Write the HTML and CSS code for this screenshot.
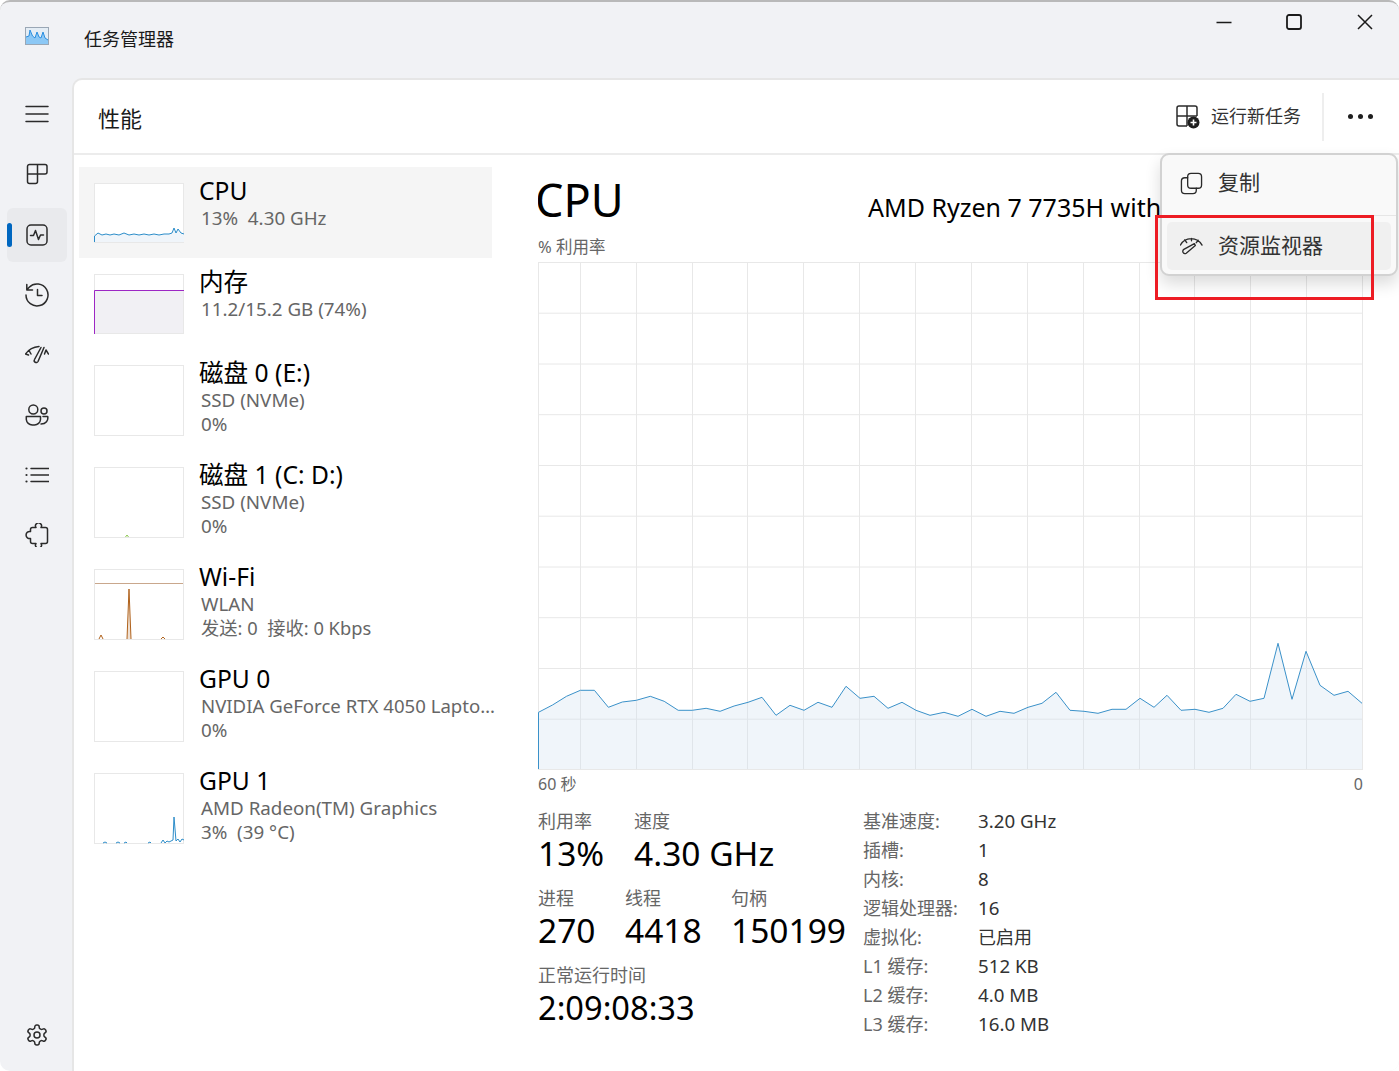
FILE: index.html
```html
<!DOCTYPE html>
<html lang="zh-CN">
<head>
<meta charset="utf-8">
<title>任务管理器</title>
<link rel="stylesheet" href="styles.css">
</head>
<body>
<div class="window">
  <header class="titlebar">
    <svg class="app-icon" viewBox="0 0 24 18"><rect x=".5" y=".5" width="23" height="17" fill="#e4edf5" stroke="#9aa7b5"/><path d="M1 16V10L4 9 5 3 7.500 9 10 11 12 5 14 10 16 11 18 5 20 11 23 13V17H1Z" fill="#8cc8f5"/><path d="M1 10L4 9 5 3 7.500 9 10 11 12 5 14 10 16 11 18 5 20 11 23 13" fill="none" stroke="#2b8fe0"/></svg>
    <span class="app-title">任务管理器</span>
    <div class="win-controls">
      <button class="win-btn"><svg viewBox="0 0 16 16" class="win-ic"><path d="M.5 8.500H15.500"/></svg></button>
      <button class="win-btn"><svg viewBox="0 0 16 16" class="win-ic win-ic-max"><rect x="1" y="1" width="14" height="14" rx="2"/></svg></button>
      <button class="win-btn win-close"><svg viewBox="0 0 16 16" class="win-ic"><path d="M1 1L15 15M15 1L1 15"/></svg></button>
    </div>
  </header>
  <div class="main">
    <nav class="nav">
      <div class="nav-item"><svg class="ic" viewBox="0 1 24 24"><path d="M1 4.500H23M1 12H23M1 19.500H23"/></svg></div>
      <div class="nav-item"><svg class="ic" viewBox="0 1 24 24"><path d="M4.500 2.500H20a2 2 0 0 1 2 2V10a2 2 0 0 1-2 2H12.500V19.500a2 2 0 0 1-2 2H4.500a2 2 0 0 1-2-2V4.500a2 2 0 0 1 2-2ZM12.500 2.500V12M2.500 12H12.500"/></svg></div>
      <div class="nav-item nav-active"><span class="nav-pill"></span><svg class="ic" viewBox="0 0 24 24"><rect x="2" y="2" width="20" height="20" rx="4"/><path d="M5.500 12.500H8.500L10.500 7.500 13.500 16.500 15.500 12H18.500"/></svg></div>
      <div class="nav-item"><svg class="ic" viewBox="0 0 24 24"><path d="M1 12A11 11 0 1 0 4.200 4.200L1.800 6.800M1.800 1.500V7H7.500M12.500 6.500V12.500H17"/></svg></div>
      <div class="nav-item"><svg class="ic" viewBox="0 1 24 24"><path d="M.5 12C3 8.500 7 5 14 4.500M4 8.500L6 12M.5 12L3.500 13M19.500 12L21 8 23.500 12"/><path d="M16 5.500L9.500 17.500A2 2 0 0 0 13 19.500L19 5.500"/></svg></div>
      <div class="nav-item"><svg class="ic" viewBox="0 0 24 24"><circle cx="8.300" cy="6.500" r="4.500"/><circle cx="19" cy="8" r="3"/><path d="M1.300 13.500H15.500V16.500A6 6 0 0 1 9.500 22H7.300A6 6 0 0 1 1.300 16.500ZM18 13.500H22.700C23.500 17.500 21 21 16 21"/></svg></div>
      <div class="nav-item"><svg class="ic" viewBox="0 0 24 24"><path d="M6 5.500H24M6 12H24M6 18.500H24"/><circle class="dot" cx="1.500" cy="5.500" r="1.100"/><circle class="dot" cx="1.500" cy="12" r="1.100"/><circle class="dot" cx="1.500" cy="18.500" r="1.100"/></svg></div>
      <div class="nav-item"><svg class="ic" viewBox="0 1 24 24"><path d="M11 5.500A3 3 0 1 1 16 5.500H20.500A2 2 0 0 1 22.500 7.500V19.500A2 2 0 0 1 20.500 21.500H16A3 3 0 1 1 11 21.500H7.500A2 2 0 0 1 5.500 19.500V16.500A3.600 3.600 0 1 1 5.500 9.500V7.500A2 2 0 0 1 7.500 5.500Z"/></svg></div>
      <div class="nav-item nav-bottom"><svg class="ic" viewBox="0 0 24 24"><path d="M12.220 2h-.44a2 2 0 0 0-2 2v.18a2 2 0 0 1-1 1.730l-.43.25a2 2 0 0 1-2 0l-.15-.08a2 2 0 0 0-2.730.73l-.22.38a2 2 0 0 0 .73 2.730l.15.1a2 2 0 0 1 1 1.720v.51a2 2 0 0 1-1 1.740l-.15.09a2 2 0 0 0-.73 2.730l.22.38a2 2 0 0 0 2.730.73l.15-.08a2 2 0 0 1 2 0l.43.25a2 2 0 0 1 1 1.730V20a2 2 0 0 0 2 2h.44a2 2 0 0 0 2-2v-.18a2 2 0 0 1 1-1.730l.43-.25a2 2 0 0 1 2 0l.15.08a2 2 0 0 0 2.730-.73l.22-.39a2 2 0 0 0-.73-2.730l-.15-.08a2 2 0 0 1-1-1.740v-.5a2 2 0 0 1 1-1.740l.15-.09a2 2 0 0 0 .73-2.730l-.22-.38a2 2 0 0 0-2.730-.73l-.15.08a2 2 0 0 1-2 0l-.43-.25a2 2 0 0 1-1-1.730V4a2 2 0 0 0-2-2Z"/><circle cx="12" cy="12" r="3"/></svg></div>
    </nav>
    <section class="panel">
      <div class="panel-head">
        <h1 class="panel-title">性能</h1>
        <div class="head-actions">
          <div class="run-task">
            <svg class="ic-run" viewBox="0 0 24 24"><path class="thin" d="M11 21H3A2 2 0 0 1 1 19V3A2 2 0 0 1 3 1H19A2 2 0 0 1 21 3V11M11 1V11H1M1 11H21M11 11V21"/><circle cx="17.500" cy="17.500" r="6" fill="#1f1f1f"/><path d="M17.500 14.500V20.500M14.500 17.500H20.500" stroke="#fff" stroke-width="1.600" fill="none"/></svg>
            <span class="run-label">运行新任务</span>
          </div>
          <span class="head-divider"></span>
          <div class="more"><i></i><i></i><i></i></div>
        </div>
      </div>
      <div class="panel-body">
        <div class="list">
          <div class="row row-selected">
            <svg class="thumb" viewBox="0 0 90 60"><path class="fill-blue" d="M0 59V53L4 50 8 52 12 51 16 52 20 51 25 52 30 50 35 52 40 51 45 52 50 51 55 52 60 51 65 52 70 51 75 51 78 50 80 45 82 50 84 46 87 50 90 51V59Z"/><path class="line-blue" d="M.5 59V53L4 50 8 52 12 51 16 52 20 51 25 52 30 50 35 52 40 51 45 52 50 51 55 52 60 51 65 52 70 51 75 51 78 50 80 45 82 50 84 46 87 50 90 51"/></svg>
            <div class="row-text"><div class="row-name">CPU</div><div class="row-sub">13%&nbsp; 4.30 GHz</div></div>
          </div>
          <div class="row">
            <svg class="thumb" viewBox="0 0 90 60"><path d="M1 16H89V59H1Z" fill="#f1f0f4"/><path d="M.5 60V16.500H90" fill="none" stroke="#9d27c4"/></svg>
            <div class="row-text"><div class="row-name">内存</div><div class="row-sub">11.2/15.2 GB (74%)</div></div>
          </div>
          <div class="row">
            <svg class="thumb thumb-tall" viewBox="0 0 90 71"></svg>
            <div class="row-text"><div class="row-name">磁盘 0 (E:)</div><div class="row-sub">SSD (NVMe)</div><div class="row-sub">0%</div></div>
          </div>
          <div class="row">
            <svg class="thumb thumb-tall" viewBox="0 0 90 71"><path d="M31.500 70L33 68 34.500 70" fill="none" stroke="#8cc850"/></svg>
            <div class="row-text"><div class="row-name">磁盘 1 (C: D:)</div><div class="row-sub">SSD (NVMe)</div><div class="row-sub">0%</div></div>
          </div>
          <div class="row">
            <svg class="thumb thumb-tall" viewBox="0 0 90 71"><path d="M1 14.500H89" stroke="#c9a78c" fill="none"/><path d="M33 70L35 20 37 70Z" fill="#efe0d2"/><path d="M33 70L35 20 37 70M5 70L7 66 9 70M67 70L69 68 71 70" fill="none" stroke="#b0621c"/></svg>
            <div class="row-text"><div class="row-name">Wi-Fi</div><div class="row-sub">WLAN</div><div class="row-sub row-sub-cjk">发送: 0&nbsp; 接收: 0 Kbps</div></div>
          </div>
          <div class="row">
            <svg class="thumb thumb-tall" viewBox="0 0 90 71"></svg>
            <div class="row-text"><div class="row-name">GPU 0</div><div class="row-sub row-clip">NVIDIA GeForce RTX 4050 Laptop GPU</div><div class="row-sub">0%</div></div>
          </div>
          <div class="row">
            <svg class="thumb thumb-tall" viewBox="0 0 90 71"><path class="line-blue" d="M9 70L11 69 13 70M22 70L24 69 26 70M30 70L32 69 33 70M54 70L56 69 57 70M67 70L69 67 71 70 73 68 75 69 77 68 79 67 80 44 82 68 84 66 86 69 88 66 90 67"/></svg>
            <div class="row-text"><div class="row-name">GPU 1</div><div class="row-sub">AMD Radeon(TM) Graphics</div><div class="row-sub">3%&nbsp; (39 °C)</div></div>
          </div>
        </div>
        <div class="detail">
          <div class="detail-head">
            <div class="detail-title">CPU</div>
            <div class="detail-model">AMD Ryzen 7 7735H with Radeon Graphics</div>
          </div>
          <div class="chart-label">% 利用率</div>
          <svg class="chart" viewBox="538 262 825 508">
            <path class="grid" d="M538 262.500H1362M538 313.200H1362M538 364H1362M538 414.700H1362M538 465.500H1362M538 516.200H1362M538 567H1362M538 617.700H1362M538 668.500H1362M538 719.200H1362M538 769.500H1362M538.500 262V770M580.500 262V770M636.500 262V770M692.500 262V770M747.500 262V770M803.500 262V770M859.500 262V770M915.500 262V770M971.500 262V770M1027.500 262V770M1083.500 262V770M1139.500 262V770M1194.500 262V770M1250.500 262V770M1306.500 262V770M1362.500 262V770"/>
            <polygon class="chart-fill" points="538.500,769 538.500,712.300 552.500,705 566.500,696.300 580.400,690.300 594.400,690.300 608.400,707.300 622.300,702 636.300,700.300 650.300,696.300 664.200,701.300 678.200,710.300 692.200,710.300 706.100,708.300 720.100,711.300 734.100,706 748,702.300 762,697.300 776,715.300 790,705.300 804,710.300 818,702.300 832,707.300 846,686.300 860,698.300 874,696.300 888,708.300 902,702.300 916,710.300 930,715.300 944,712.300 958,716.300 972,709.300 986,716.300 1000,711.300 1014,713.300 1028,707.300 1042,703.300 1056,692.300 1070,710.300 1084,711.300 1098,713.300 1112,709.300 1126,709.300 1140,698.300 1154,707.300 1167,695.300 1181,710.300 1195,709.300 1209,712.300 1223,708.300 1236,694.300 1250,701.300 1264,698.300 1278,643.300 1292,699.300 1306,651.300 1320,685.300 1334,695.300 1348,691.300 1362,703.300 1362,769"/>
            <polyline class="chart-line" points="538.500,769 538.500,712.300 552.500,705 566.500,696.300 580.400,690.300 594.400,690.300 608.400,707.300 622.300,702 636.300,700.300 650.300,696.300 664.200,701.300 678.200,710.300 692.200,710.300 706.100,708.300 720.100,711.300 734.100,706 748,702.300 762,697.300 776,715.300 790,705.300 804,710.300 818,702.300 832,707.300 846,686.300 860,698.300 874,696.300 888,708.300 902,702.300 916,710.300 930,715.300 944,712.300 958,716.300 972,709.300 986,716.300 1000,711.300 1014,713.300 1028,707.300 1042,703.300 1056,692.300 1070,710.300 1084,711.300 1098,713.300 1112,709.300 1126,709.300 1140,698.300 1154,707.300 1167,695.300 1181,710.300 1195,709.300 1209,712.300 1223,708.300 1236,694.300 1250,701.300 1264,698.300 1278,643.300 1292,699.300 1306,651.300 1320,685.300 1334,695.300 1348,691.300 1362,703.300"/>
          </svg>
          <div class="chart-axis"><span>60 秒</span><span>0</span></div>
          <div class="stats">
            <div class="stats-left">
              <div class="stat-row stat-row-a">
                <div class="stat"><div class="stat-label">利用率</div><div class="stat-value">13%</div></div>
                <div class="stat"><div class="stat-label">速度</div><div class="stat-value">4.30 GHz</div></div>
              </div>
              <div class="stat-row">
                <div class="stat stat-w87"><div class="stat-label">进程</div><div class="stat-value">270</div></div>
                <div class="stat stat-w106"><div class="stat-label">线程</div><div class="stat-value">4418</div></div>
                <div class="stat"><div class="stat-label">句柄</div><div class="stat-value">150199</div></div>
              </div>
              <div class="stat-row">
                <div class="stat"><div class="stat-label">正常运行时间</div><div class="stat-value stat-time">2:09:08:33</div></div>
              </div>
            </div>
            <dl class="specs">
              <dt>基准速度:</dt><dd>3.20 GHz</dd>
              <dt>插槽:</dt><dd>1</dd>
              <dt>内核:</dt><dd>8</dd>
              <dt>逻辑处理器:</dt><dd>16</dd>
              <dt>虚拟化:</dt><dd class="dd-cjk">已启用</dd>
              <dt>L1 缓存:</dt><dd>512 KB</dd>
              <dt>L2 缓存:</dt><dd>4.0 MB</dd>
              <dt>L3 缓存:</dt><dd>16.0 MB</dd>
            </dl>
          </div>
        </div>
      </div>
    </section>
  </div>
  <div class="popup">
    <div class="popup-item popup-first">
      <svg class="ic-pop" viewBox="0 0 24 24"><rect x="8" y="1.500" width="14.500" height="15.500" rx="3.500"/><path d="M8 6H5A3.500 3.500 0 0 0 1.500 9.500V19A3.500 3.500 0 0 0 5 22.500H13.500A3.500 3.500 0 0 0 17 19V17"/></svg>
      <span class="popup-text">复制</span>
    </div>
    <div class="popup-sep"></div>
    <div class="popup-item popup-hover">
      <svg class="ic-pop" viewBox="0 0 24 24"><path d="M.5 10.500C5 1.500 18 1.500 23 10.500M5 5L7 8M12 3.500V6M19 5.500L17 8"/><path d="M15 9L4 15A2 2 0 0 0 6.500 19L16 11Z"/></svg>
      <span class="popup-text">资源监视器</span>
    </div>
  </div>
  <div class="red-box"></div>
</div>
</body>
</html>
```
FILE: styles.css
```css
* { box-sizing: border-box; }
html, body { margin: 0; height: 100%; background: #fff; overflow: hidden; }
body { font-family: "Noto Sans", "Noto Sans CJK SC", sans-serif; color: #1a1a1a; }
svg { display: block; }

.window {
  position: relative;
  width: 1399px;
  height: 1071px;
  display: flex;
  flex-direction: column;
  background: #f1f2f5;
  border-top: 2px solid #b9b9b9;
  border-radius: 10px;
  overflow: hidden;
}

.titlebar { height: 76px; flex: none; display: flex; align-items: flex-start; }
.app-icon { width: 24px; height: 18px; margin: 25px 0 0 25px; }
.app-title { font-size: 18px; line-height: 24px; margin: 25px 0 0 35px; }
.win-controls { margin-left: auto; display: flex; }
.win-btn { width: 70px; height: 40px; padding: 0; border: 0; background: none; display: flex; align-items: center; justify-content: center; }
.win-close { margin-left: 1px; margin-right: -1px; }
.win-ic { width: 16px; height: 16px; fill: none; stroke: #1a1a1a; stroke-width: 1.500; }
.win-ic-max { stroke-width: 1.800; }

.main { flex: 1; display: flex; min-height: 0; }
.nav { width: 72px; flex: none; display: flex; flex-direction: column; padding: 10px 5px 9px 7px; gap: 6px; }
.nav-item { position: relative; height: 54px; flex: none; border-radius: 6px; display: flex; align-items: center; justify-content: center; }
.nav-active { background: #e9eaed; }
.nav-pill { position: absolute; left: 0; top: 15px; width: 5px; height: 24px; border-radius: 3px; background: #0067c0; }
.nav-bottom { margin-top: auto; }
.ic { width: 24px; height: 24px; fill: none; stroke: #2b2b2b; stroke-width: 1.500; stroke-linejoin: round; stroke-linecap: round; }
.ic .dot { fill: #2b2b2b; stroke: none; }

.panel { flex: 1; min-width: 0; background: #fff; border-top: 2px solid #e6e6e6; border-left: 2px solid #e6e6e6; border-top-left-radius: 10px; display: flex; flex-direction: column; }
.panel-head { height: 75px; flex: none; display: flex; align-items: center; padding-left: 24px; border-bottom: 2px solid #ececec; }
.panel-title { font-size: 22px; font-weight: 400; margin: 0; line-height: 30px; padding-top: 2px; }
.head-actions { margin-left: auto; display: flex; align-items: center; }
.run-task { display: flex; align-items: center; gap: 11px; font-size: 18px; color: #333; }
.run-label { padding-bottom: 3px; }
.ic-run { width: 24px; height: 24px; }
.ic-run .thin { fill: none; stroke: #2b2b2b; stroke-width: 1.500; }
.head-divider { width: 2px; height: 48px; background: #eeeeee; margin: 0 24px 0 21px; }
.more { display: flex; gap: 5px; margin-right: 26px; }
.more i { width: 5px; height: 5px; border-radius: 50%; background: #1f1f1f; }

.panel-body { flex: 1; display: flex; min-height: 0; }
.list { width: 418px; flex: none; padding: 12px 0 0 5px; display: flex; flex-direction: column; }
.row { width: 413px; display: flex; align-items: flex-start; padding: 16px 0 15px 15px; flex: none; }
.row-selected { background: #f5f5f5; }
.thumb { width: 90px; height: 60px; flex: none; background: #fff; box-shadow: inset 0 0 0 1px #e8e8e8; overflow: hidden; }
.thumb-tall { height: 71px; }
.row-text { margin-left: 15px; min-width: 0; margin-top: -7px; }
.row-name { font-size: 24.600px; line-height: 30px; color: #000; white-space: nowrap; }
.row-sub { font-size: 18.800px; line-height: 24px; color: #666; margin-left: 2px; white-space: nowrap; }
.row-sub-cjk { font-size: 18.300px; }
.row-clip { width: 294px; overflow: hidden; text-overflow: ellipsis; font-size: 18.600px; }
.fill-blue { fill: #f0f5fa; }
.line-blue { fill: none; stroke: #2b8cc9; stroke-width: 1; }

.detail { flex: 1; min-width: 0; padding: 15px 0 0 46px; display: flex; flex-direction: column; }
.detail-head { height: 66px; flex: none; display: flex; align-items: baseline; overflow: hidden; white-space: nowrap; }
.detail-title { font-size: 45px; line-height: 60px; width: 330px; flex: none; color: #000; transform: translateX(-3px); }
.detail-model { font-size: 25px; color: #000; }
.chart-label { font-size: 16.500px; line-height: 22px; color: #666; }
.chart { width: 825px; height: 508px; margin-top: 4px; flex: none; }
.grid { fill: none; stroke: #e8e8e8; stroke-width: 1; }
.chart-fill { fill: #cfe0ee; fill-opacity: .32; }
.chart-line { fill: none; stroke: #3a91c9; stroke-width: 1; }
.chart-axis { display: flex; justify-content: space-between; width: 825px; margin-top: 2px; font-size: 16px; line-height: 24px; color: #666; }
.stats { display: flex; margin-top: 13px; }
.stats-left { width: 325px; flex: none; }
.stat-row { display: flex; margin-bottom: 11px; }
.stat-row-a .stat:first-child { width: 96px; }
.stat-w87 { width: 87px; }
.stat-w106 { width: 106px; }
.stat-label { font-size: 18px; line-height: 24px; color: #666; white-space: nowrap; }
.stat-value { font-size: 33.500px; line-height: 42px; color: #000; white-space: nowrap; margin-top: -1px; margin-bottom: 1px; }
.stat-time { font-size: 32.600px; margin-top: 0; margin-bottom: 0; }
.specs { margin: 0; display: grid; grid-template-columns: 115px auto; grid-auto-rows: 29px; font-size: 18px; line-height: 24px; }
.specs dt { color: #666; white-space: nowrap; }
.specs dd { margin: 0; color: #333; white-space: nowrap; font-size: 18.700px; }
.specs .dd-cjk { font-size: 18px; }

.popup { position: absolute; left: 1160px; top: 151px; width: 238px; height: 123px; background: #f9f9f9; border: 2px solid #d2d2d2; border-radius: 9px; box-shadow: 0 8px 16px rgba(0,0,0,.14); padding: 5px; font-size: 21px; color: #333; }
.popup-item { height: 48px; display: flex; align-items: center; padding-left: 13px; gap: 15px; border-radius: 5px; }
.popup-first { height: 46px; }
.popup-text { padding-bottom: 4px; }
.popup-sep { height: 1px; background: #e6e6e6; margin: 9px -5px 6px; }
.popup-hover { background: #f0f0f0; }
.ic-pop { width: 23px; height: 23px; fill: none; stroke: #2b2b2b; stroke-width: 1.400; stroke-linejoin: round; stroke-linecap: round; }

.red-box { position: absolute; left: 1155px; top: 213px; width: 219px; height: 85px; border: 3px solid #ed1c24; }
```
